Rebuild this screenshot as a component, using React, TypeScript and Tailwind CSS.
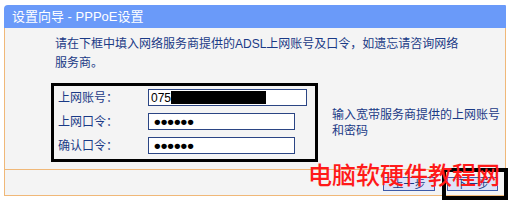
import React from 'react'

const font = "font-['Liberation_Sans','Noto_Sans_CJK_SC',sans-serif]"

function Field({ label, width, children }: { label: string; width: string; children: React.ReactNode }) {
  return (
    <div className="flex items-center h-[17px]">
      <span className="w-[90px] text-[12px] leading-none text-[#1a3a86]">{label}</span>
      <div className={`relative h-[17px] ${width} border border-[#2b4584] bg-white flex items-center`}>
        {children}
      </div>
    </div>
  )
}

function Dots() {
  return (
    <span className="pl-[5px] text-[19px] leading-[15px] text-black font-bold">••••••</span>
  )
}

export default function App() {
  return (
    <div className={`relative w-[509px] h-[201px] bg-white overflow-hidden ${font}`}>
      <div className="pt-[5px] px-[4px]">
        {/* title bar */}
        <div className="h-[23px] w-[502px] bg-[#6a9af9] rounded-tl-[4px] rounded-tr-[1px] flex items-center pl-[8px] text-white text-[13px] leading-none">
          设置向导 - PPPoE设置
        </div>

        {/* body */}
        <div className="w-[502px] h-[168px] bg-[#f4f4f4] border-x border-b border-[#f0b878] flex flex-col">
          <div className="h-[141px] pt-[7px]">
            <p className="pl-[50px] text-[12px] leading-[19px] text-[#1a3a86]">
              请在下框中填入网络服务商提供的ADSL上网账号及口令，如遗忘请咨询网络
              <br />
              服务商。
            </p>

            <div className="mt-[10px] flex items-center">
              <div className="ml-[46px] w-[267px] h-[79px] border-[3px] border-black pl-[4px] pt-[3px] flex flex-col gap-[7px]">
                <Field label="上网账号：" width="w-[159px]">
                  <span className="pl-[2px] text-[12px] leading-none text-black">0755</span>
                  <span className="absolute left-[22px] top-[1px] w-[95px] h-[13px] bg-black" />
                </Field>
                <Field label="上网口令：" width="w-[147px]">
                  <Dots />
                </Field>
                <Field label="确认口令：" width="w-[147px]">
                  <Dots />
                </Field>
              </div>
              <p className="ml-[14px] text-[12px] leading-[16px] text-[#1a3a86]">
                输入宽带服务商提供的上网账号
                <br />
                和密码
              </p>
            </div>
          </div>

          {/* footer */}
          <div className="flex-1 border-t border-[#f0b878] flex justify-end items-start pt-[7px] pr-[7px] gap-[12px]">
            <button className="w-[52px] h-[14px] bg-[#dde2f8] border border-[#3d5aa8] text-[11px] leading-none text-[#1a3a86]">
              上一步
            </button>
            <button className="w-[51px] h-[14px] bg-[#dde2f8] border border-[#3d5aa8] text-[11px] leading-none text-[#1a3a86]">
              下一步
            </button>
          </div>
        </div>
      </div>

      {/* annotation around next button */}
      <div className="absolute left-[442px] top-[168px] w-[66px] h-[32px] border-[4px] border-black" />

      {/* watermark */}
      <div className="absolute left-[308px] top-[162px] text-[24px] leading-none font-medium text-[#ff1a1a] font-['Noto_Sans_CJK_SC',sans-serif] whitespace-nowrap">
        电脑软硬件教程网
      </div>
    </div>
  )
}
